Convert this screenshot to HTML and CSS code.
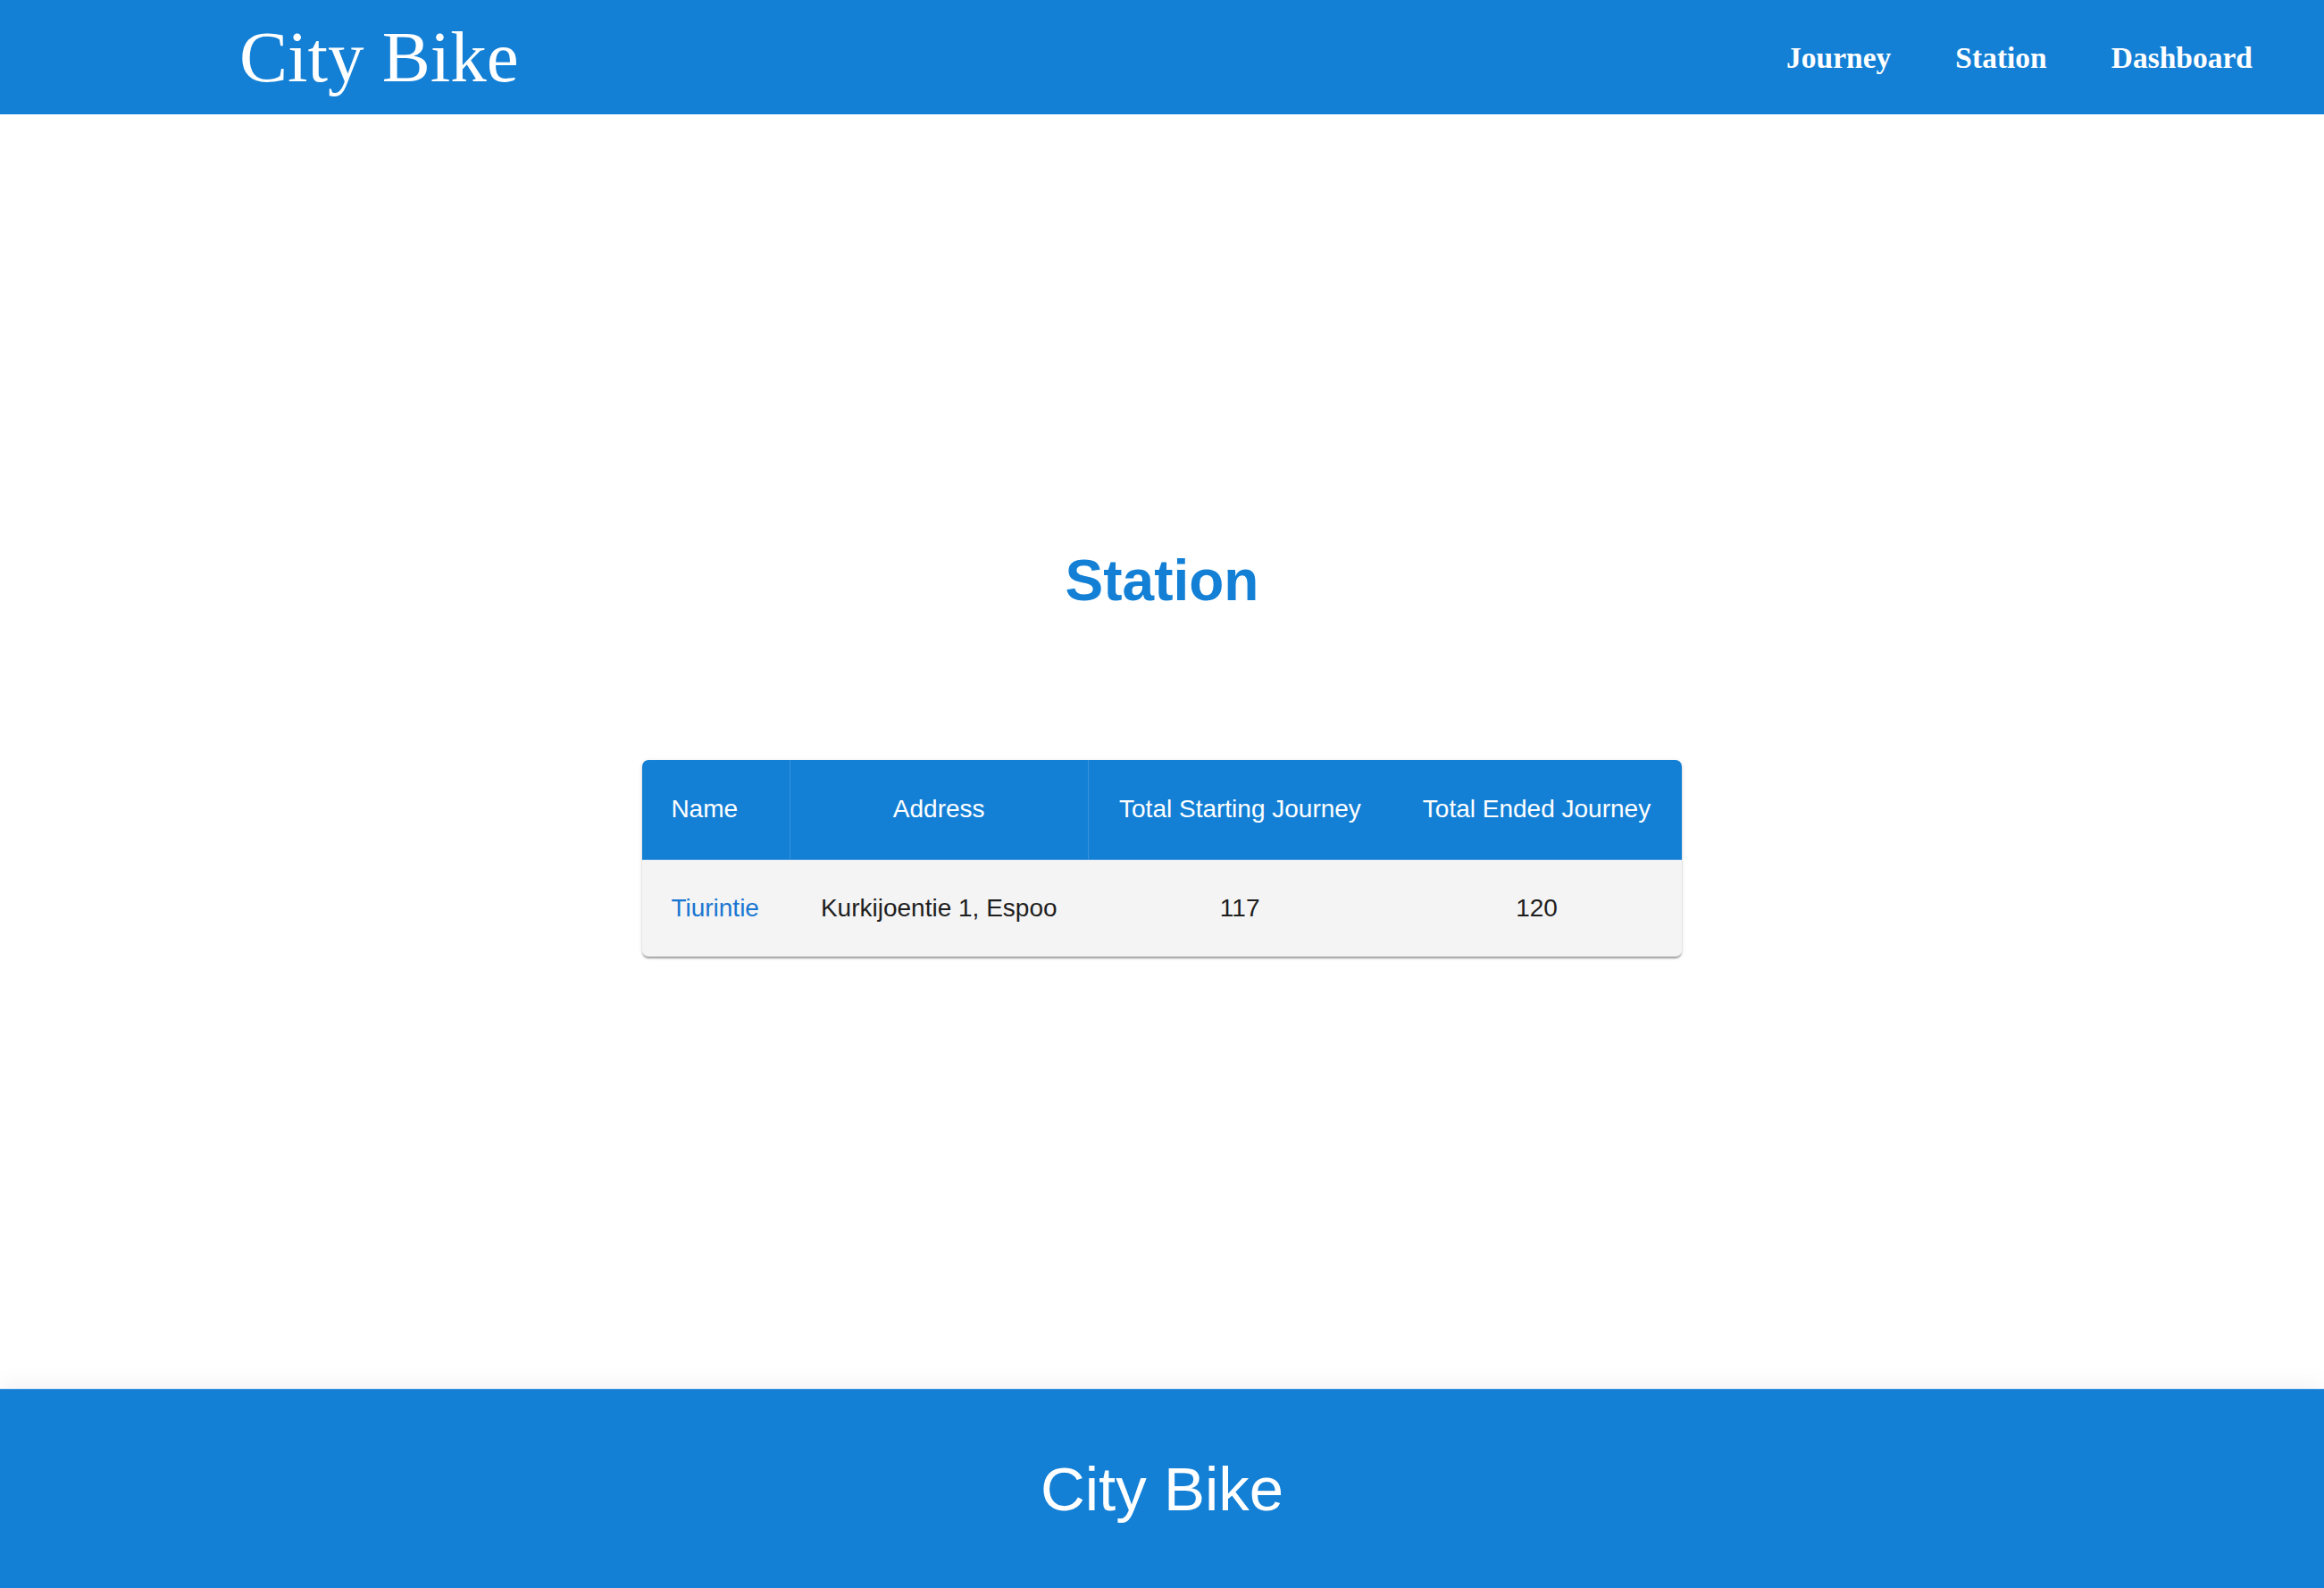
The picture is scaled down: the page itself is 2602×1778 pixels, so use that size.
FILE: index.html
```html
<!DOCTYPE html>
<html lang="en">
<head>
<meta charset="utf-8">
<title>City Bike</title>
<link rel="stylesheet" href="styles.css">
</head>
<body>
<div class="page">
  <header class="topbar">
    <div class="logo">City Bike</div>
    <nav class="nav">
      <a class="nav-link" href="#">Journey</a>
      <a class="nav-link" href="#">Station</a>
      <a class="nav-link" href="#">Dashboard</a>
    </nav>
  </header>
  <main class="main">
    <h2 class="title">Station</h2>
    <div class="card">
      <table class="table">
        <thead>
          <tr>
            <th class="th th-left th-div">Name</th>
            <th class="th th-div">Address</th>
            <th class="th">Total Starting Journey</th>
            <th class="th">Total Ended Journey</th>
          </tr>
        </thead>
        <tbody>
          <tr>
            <td class="td td-left"><a class="link" href="#">Tiurintie</a></td>
            <td class="td">Kurkijoentie 1, Espoo</td>
            <td class="td">117</td>
            <td class="td">120</td>
          </tr>
        </tbody>
      </table>
    </div>
  </main>
  <footer class="footer">City Bike</footer>
</div>
</body>
</html>
```

FILE: styles.css
```css
html, body {
  margin: 0;
  padding: 0;
  background: #ffffff;
}

.page {
  min-height: 100vh;
  display: flex;
  flex-direction: column;
}

.topbar {
  height: 128px;
  background: #1380d6;
  display: flex;
  align-items: center;
  justify-content: space-between;
  padding: 0 80px 0 268px;
  box-sizing: border-box;
  flex-shrink: 0;
}

.logo {
  font-family: "Liberation Serif", "Times New Roman", serif;
  font-size: 81px;
  color: #ffffff;
  line-height: normal;
}

.nav {
  display: flex;
  gap: 72px;
  align-items: center;
  padding-top: 2px;
}

.nav-link {
  font-family: "Liberation Serif", "Times New Roman", serif;
  font-weight: bold;
  font-size: 33.5px;
  color: #ffffff;
  text-decoration: none;
  line-height: normal;
}

.main {
  flex: 1;
  display: flex;
  flex-direction: column;
  align-items: center;
  justify-content: center;
}

.title {
  margin: 0 0 164px;
  font-family: "Liberation Sans", Arial, sans-serif;
  font-weight: bold;
  font-size: 64px;
  line-height: normal;
  color: #1380d6;
}

.card {
  border-radius: 7px;
  overflow: hidden;
  background: #f4f4f4;
  box-shadow: 0 3px 2px -1px rgba(0,0,0,0.22), 0 2px 2px 0 rgba(0,0,0,0.14), 0 1px 5px 0 rgba(0,0,0,0.12);
}

.table {
  border-collapse: collapse;
  font-family: "Liberation Sans", Arial, sans-serif;
  font-size: 28px;
}

.th {
  height: 112px;
  padding: 0 34.5px;
  background: #1380d6;
  color: #ffffff;
  font-weight: normal;
  text-align: center;
  white-space: nowrap;
  box-sizing: border-box;
  border-bottom: 1px solid #4a9be0;
}

.th-div {
  border-right: 1px solid #3a93dc;
}

.th-left {
  text-align: left;
  padding-left: 32px;
}

.td {
  height: 108px;
  padding: 0 34.5px;
  color: #1e1e1e;
  text-align: center;
  white-space: nowrap;
  box-sizing: border-box;
}

.td-left {
  text-align: left;
  padding-left: 32px;
}

.link {
  color: #1976d2;
  text-decoration: none;
}

.footer {
  height: 223px;
  background: #1380d6;
  color: #ffffff;
  font-family: "Liberation Sans", Arial, sans-serif;
  font-size: 69px;
  display: flex;
  align-items: center;
  justify-content: center;
  flex-shrink: 0;
  box-shadow: 0 -6px 24px rgba(0,0,0,0.05);
  border-top: 1px solid #3a93dc;
  box-sizing: border-box;
}
```
